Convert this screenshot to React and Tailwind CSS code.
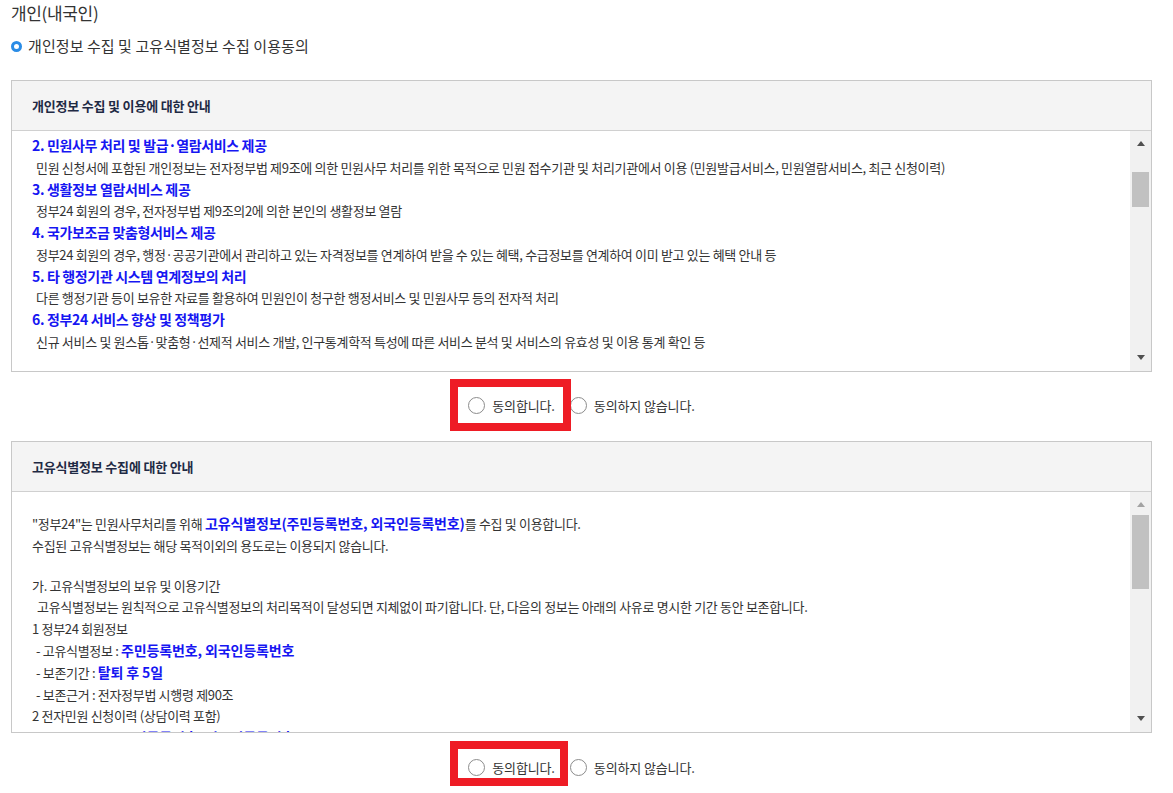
import React from 'react';

const font = { fontFamily: '"Noto Sans CJK KR", "Noto Sans", sans-serif' };

const Arrow = ({ up, light }) => (
  <svg width="8" height="5" viewBox="0 0 8 5" className="mx-auto block">
    <path d={up ? 'M0 5 L4 0 L8 5 Z' : 'M0 0 L8 0 L4 5 Z'} fill={light ? '#a3a3a3' : '#505050'} />
  </svg>
);

const Scrollbar = ({ thumbClass, upLight }) => (
  <div className="w-[21px] shrink-0 bg-[#f1f1f1] flex flex-col">
    <div className="pt-[10px]">
      <Arrow up light={upLight} />
    </div>
    <div className={`mx-[2px] bg-[#c1c1c1] ${thumbClass}`} />
    <div className="flex-1" />
    <div className="pb-[11px]">
      <Arrow />
    </div>
  </div>
);

const Box = ({ title, thumbClass, upLight, children }) => (
  <div className="ml-[11px] w-[1141px] border border-[#c8c8c8] bg-white">
    <div className="h-[50px] bg-[#f4f4f4] border-b border-[#d0d0d0] flex items-center pl-[20px]">
      <span className="text-[13px] font-bold text-[#1f2a44] tracking-[-0.015em]">{title}</span>
    </div>
    <div className="h-[240px] flex">
      <div className="flex-1 overflow-hidden pl-[20px] text-[#333] tracking-[-0.02em]">{children}</div>
      <Scrollbar thumbClass={thumbClass} upLight={upLight} />
    </div>
  </div>
);

const Radio = ({ label }) => (
  <label className="flex items-center gap-[7px] text-[13px] leading-[19px] text-[#333] tracking-[-0.01em]">
    <span className="w-[17px] h-[17px] rounded-full border border-[#8c8c8c] bg-white" />
    {label}
  </label>
);

const AgreeRow = ({ rowClass, boxClass }) => (
  <div className={`ml-[11px] w-[1141px] flex items-center justify-center gap-[15px] ${rowClass}`}>
    <div className="relative">
      <Radio label="동의합니다." />
      <div className={`absolute border-[8px] border-[#ee1c25] pointer-events-none ${boxClass}`} />
    </div>
    <Radio label="동의하지 않습니다." />
  </div>
);

const Item = ({ head, body }) => (
  <>
    <div className="text-[14px] font-bold text-[#1616f2] leading-[21.75px] tracking-[-0.025em]">{head}</div>
    <div className="text-[13px] leading-[21.75px] pl-[4px]">{body}</div>
  </>
);

const B = ({ children }) => (
  <span className="font-bold text-[#1616f2] text-[14px] tracking-[-0.01em]">{children}</span>
);

export default function App() {
  return (
    <div className="bg-white min-h-screen w-[1173px] overflow-hidden" style={font}>
      <div className="pl-[11px] text-[17px] leading-[26px] text-[#333] tracking-[-0.02em]">개인(내국인)</div>
      <div className="mt-[9px] pl-[11px] flex items-center gap-[6px] leading-[22px]">
        <span className="w-[11px] h-[11px] rounded-full border-[3px] border-[#2a8ce6]" />
        <span className="text-[15px] text-[#333] tracking-[0.005em]">개인정보 수집 및 고유식별정보 수집 이용동의</span>
      </div>

      <div className="mt-[23px]">
        <Box title="개인정보 수집 및 이용에 대한 안내" thumbClass="mt-[26px] h-[35px]">
          <div className="pt-[4px]">
            <Item
              head="2. 민원사무 처리 및 발급·열람서비스 제공"
              body="민원 신청서에 포함된 개인정보는 전자정부법 제9조에 의한 민원사무 처리를 위한 목적으로 민원 접수기관 및 처리기관에서 이용 (민원발급서비스, 민원열람서비스, 최근 신청이력)"
            />
            <Item head="3. 생활정보 열람서비스 제공" body="정부24 회원의 경우, 전자정부법 제9조의2에 의한 본인의 생활정보 열람" />
            <Item
              head="4. 국가보조금 맞춤형서비스 제공"
              body="정부24 회원의 경우, 행정·공공기관에서 관리하고 있는 자격정보를 연계하여 받을 수 있는 혜택, 수급정보를 연계하여 이미 받고 있는 혜택 안내 등"
            />
            <Item
              head="5. 타 행정기관 시스템 연계정보의 처리"
              body="다른 행정기관 등이 보유한 자료를 활용하여 민원인이 청구한 행정서비스 및 민원사무 등의 전자적 처리"
            />
            <Item
              head="6. 정부24 서비스 향상 및 정책평가"
              body="신규 서비스 및 원스톱·맞춤형·선제적 서비스 개발, 인구통계학적 특성에 따른 서비스 분석 및 서비스의 유효성 및 이용 통계 확인 등"
            />
          </div>
        </Box>
      </div>

      <AgreeRow rowClass="h-[69px] pb-[3px]" boxClass="-left-[18px] -right-[16px] -top-[17px] -bottom-[16px]" />

      <Box title="고유식별정보 수집에 대한 안내" thumbClass="mt-[8px] h-[74px]" upLight>
        <div className="pt-[21px] text-[13px] leading-[21.8px]">
          <div>
            "정부24"는 민원사무처리를 위해 <B>고유식별정보(주민등록번호, 외국인등록번호)</B>를 수집 및 이용합니다.
          </div>
          <div>수집된 고유식별정보는 해당 목적이외의 용도로는 이용되지 않습니다.</div>
          <div className="h-[18px]" />
          <div>가. 고유식별정보의 보유 및 이용기간</div>
          <div className="pl-[5px]">
            고유식별정보는 원칙적으로 고유식별정보의 처리목적이 달성되면 지체없이 파기합니다. 단, 다음의 정보는 아래의 사유로 명시한 기간 동안 보존합니다.
          </div>
          <div>1 정부24 회원정보</div>
          <div className="pl-[4px]">
            - 고유식별정보 : <B>주민등록번호, 외국인등록번호</B>
          </div>
          <div className="pl-[4px]">
            - 보존기간 : <B>탈퇴 후 5일</B>
          </div>
          <div className="pl-[4px]">- 보존근거 : 전자정부법 시행령 제90조</div>
          <div>2 전자민원 신청이력 (상담이력 포함)</div>
          <div className="pl-[4px]">
            - 고유식별정보 : <B>주민등록번호, 외국인등록번호</B>
          </div>
        </div>
      </Box>

      <AgreeRow rowClass="h-[68px]" boxClass="-left-[18px] -right-[13px] -top-[17px] -bottom-[9px]" />
    </div>
  );
}
